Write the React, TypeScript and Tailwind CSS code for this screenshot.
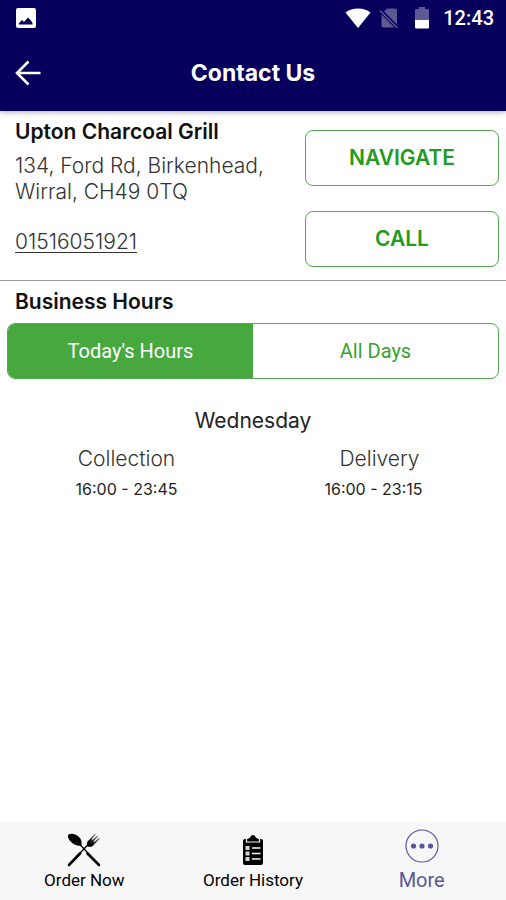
import { useState } from 'react';

const DAYS = ['Monday', 'Tuesday', 'Wednesday', 'Thursday', 'Friday', 'Saturday', 'Sunday'];

function StatusBar() {
  return (
    <div className="flex h-9 items-center justify-between pl-4 pr-3 text-white">
      <svg viewBox="0 0 20 20" className="h-5 w-5" aria-hidden="true">
        <rect x="0" y="0" width="20" height="20" rx="2" fill="currentColor" />
        <path d="M3 16.500V15l3-3 2 2 4-4.500 2.500 2.500 2 3v1.500z" fill="#06005c" />
      </svg>
      <div className="flex items-center">
        <svg viewBox="0 0 26 20" className="h-5 w-[26px]" aria-hidden="true">
          <path d="M.5 4.500C7-1 19-1 25.500 4.500L13 20z" fill="currentColor" />
        </svg>
        <svg viewBox="0 0 20 20" className="ml-2 h-5 w-5" aria-hidden="true">
          <path d="M5 3.500L8 .5h8a2 2 0 0 1 2 2v14z" fill="#5e5992" />
          <path d="M2.500 6.500L15.500 19.500h-11a2 2 0 0 1-2-2z" fill="#5e5992" />
          <path d="M.8 2.500L18.500 20" stroke="#5e5992" strokeWidth="1.500" />
        </svg>
        <svg viewBox="0 0 14 22" className="ml-4 h-[22px] w-3.5" aria-hidden="true">
          <path d="M0 13V3.500A1.500 1.500 0 0 1 1.500 2H4V0h6v2h2.500A1.500 1.500 0 0 1 14 3.500V13z" fill="#5e5992" />
          <path d="M0 13h14v7.500a1 1 0 0 1-1 1H1a1 1 0 0 1-1-1z" fill="currentColor" />
        </svg>
        <span className="ml-3.5 font-['Roboto',sans-serif] text-[20px] font-medium leading-6">12:43</span>
      </div>
    </div>
  );
}

function CutleryIcon() {
  return (
    <svg viewBox="0 0 34 34" className="h-[34px] w-[34px]" aria-hidden="true">
      <defs>
        <linearGradient id="fork" x1="0" y1="1" x2="1" y2="0">
          <stop offset="0.25" stopColor="#000" />
          <stop offset="1" stopColor="#bbb" />
        </linearGradient>
      </defs>
      <path d="M1.500 1.500C4.500-.3 9.500 1 12.500 4.500c2 2.500 2.500 5 1.800 8-3 .7-6 0-9-2.500C2 7.200 0 3.500 1.500 1.500z" />
      <path d="M13 11.500L32 32" stroke="currentColor" strokeWidth="1.300" />
      <path d="M20.500 20.500L32 32" stroke="currentColor" strokeWidth="2.600" strokeLinecap="round" />
      <path d="M22 10.500L2 32" stroke="currentColor" strokeWidth="1.300" />
      <path d="M13 20.500L2 32" stroke="currentColor" strokeWidth="2.600" strokeLinecap="round" />
      <path
        d="M20.500 8.500L28 .8l.8.8-4 4.600.7.700 4.700-4.300.9.800-4.300 4.700.8.700 4.400-4 .9.900-6.900 7c-1.500 1.300-3.500 1.300-5.500.9-.5-2-.8-3.600 0-5.100z"
        fill="url(#fork)"
      />
    </svg>
  );
}

function ClipboardIcon() {
  return (
    <svg viewBox="0 0 20 30" className="h-[30px] w-5" aria-hidden="true">
      <path d="M2 4h16a2 2 0 0 1 2 2v22a2 2 0 0 1-2 2H2a2 2 0 0 1-2-2V6a2 2 0 0 1 2-2z" />
      <path d="M4.500 4C6 3 7 3 7.500 2a2.600 2.600 0 0 1 5 0c.5 1 1.500 1 3 2v2.500h-11z" />
      <path d="M3.500 4v3h13V4" fill="none" stroke="#f7f7f7" strokeWidth="1.200" />
      <g fill="#d4d4d4">
        <rect x="2.500" y="11" width="4" height="4" />
        <rect x="2.500" y="16.500" width="4" height="4" />
        <rect x="2.500" y="22" width="4" height="4" />
      </g>
      <path d="M9 13h8.500M9 18.500h8.500M9 24h8.500" stroke="#f7f7f7" strokeWidth="1.400" />
    </svg>
  );
}

function MoreIcon() {
  return (
    <svg viewBox="0 0 34 34" className="h-[34px] w-[34px]" aria-hidden="true">
      <circle cx="17" cy="17" r="16" fill="none" stroke="currentColor" strokeWidth="1.200" />
      <circle cx="8.500" cy="17" r="2.600" />
      <circle cx="17" cy="17" r="2.600" />
      <circle cx="25.500" cy="17" r="2.600" />
    </svg>
  );
}

function Hours({ day }: { day: string }) {
  return (
    <div className="text-center">
      <h3 className="text-[21px] leading-7 text-[#222]">{day}</h3>
      <div className="mt-3 grid grid-cols-2">
        <div>
          <p className="text-[21px] font-light leading-6 text-[#333]">Collection</p>
          <p className="mt-2 text-[16px] leading-5 text-[#222]">16:00 - 23:45</p>
        </div>
        <div>
          <p className="text-[21px] font-light leading-6 text-[#333]">Delivery</p>
          <p className="mt-2 pr-3 text-[16px] leading-5 text-[#222]">16:00 - 23:15</p>
        </div>
      </div>
    </div>
  );
}

export default function App() {
  const [allDays, setAllDays] = useState(false);
  const actionClass =
    'flex h-14 items-center justify-center rounded-lg border border-[#55a955] text-[21px] font-semibold text-[#229b20]';

  return (
    <div className="flex min-h-screen flex-col bg-white font-['Inter',sans-serif]">
      <header className="relative bg-[#06005c] text-white shadow-[0_1px_6px_rgba(0,0,0,0.35)]">
        <StatusBar />
        <div className="grid h-[75px] grid-cols-[56px_1fr_56px] items-center pb-0.5">
          <button type="button" aria-label="Back" className="flex justify-center">
            <svg viewBox="0 0 26 26" className="h-[26px] w-[26px]" fill="none" stroke="currentColor" strokeWidth="2.600">
              <path d="M13.500 1.500L2 13l11.500 11.500M2 13h23.500" />
            </svg>
          </button>
          <h1 className="text-center text-[23px] font-bold leading-7">Contact Us</h1>
        </div>
      </header>

      <main className="flex-1">
        <section className="flex justify-between border-b border-[#999] pl-[15px] pr-[7px]">
          <div className="pt-[7px]">
            <h2 className="text-[21px] font-semibold leading-7 text-[#111]">Upton Charcoal Grill</h2>
            <address className="mt-[7px] text-[21px] font-light not-italic leading-[26px] text-[#333]">
              134, Ford Rd, Birkenhead,
              <br />
              Wirral, CH49 0TQ
              <a href="tel:01516051921" className="mt-6 block w-fit underline decoration-1 underline-offset-3">
                01516051921
              </a>
            </address>
          </div>
          <div className="flex w-[194px] flex-col gap-[25px] pb-[13px] pt-[19px]">
            <button type="button" className={actionClass}>NAVIGATE</button>
            <a href="tel:01516051921" className={actionClass}>CALL</a>
          </div>
        </section>

        <section className="pt-[7px]">
          <h2 className="pl-[15px] text-[21px] font-semibold leading-7 text-[#111]">Business Hours</h2>
          <div className="mx-[7px] mt-[7px] grid h-14 grid-cols-2 overflow-hidden rounded-lg border border-[#55a955] font-['Roboto',sans-serif] text-[20px]">
            <button
              type="button"
              aria-pressed={!allDays}
              onClick={() => setAllDays(false)}
              className={allDays ? 'text-[#35a133]' : 'bg-[#47a83f] text-white'}
            >
              Today's Hours
            </button>
            <button
              type="button"
              aria-pressed={allDays}
              onClick={() => setAllDays(true)}
              className={allDays ? 'bg-[#47a83f] text-white' : 'text-[#35a133]'}
            >
              All Days
            </button>
          </div>
          <div className="flex flex-col gap-6 py-7">
            {(allDays ? DAYS : ['Wednesday']).map((day) => (
              <Hours key={day} day={day} />
            ))}
          </div>
        </section>
      </main>

      <nav className="sticky bottom-0 grid h-[78px] grid-cols-3 bg-[#f7f7f7] font-['Roboto',sans-serif] text-black">
        <a href="#order" className="flex flex-col items-center pt-2.5 text-[17px] leading-6">
          <span className="flex h-9 items-center fill-current"><CutleryIcon /></span>
          Order Now
        </a>
        <a href="#history" className="flex flex-col items-center pt-2.5 text-[17px] leading-6">
          <span className="flex h-9 items-center fill-current"><ClipboardIcon /></span>
          Order History
        </a>
        <a href="#more" className="flex flex-col items-center pt-1.5 text-[20px] leading-8 text-[#5b559b]">
          <span className="flex h-9 items-center fill-current"><MoreIcon /></span>
          More
        </a>
      </nav>
    </div>
  );
}
